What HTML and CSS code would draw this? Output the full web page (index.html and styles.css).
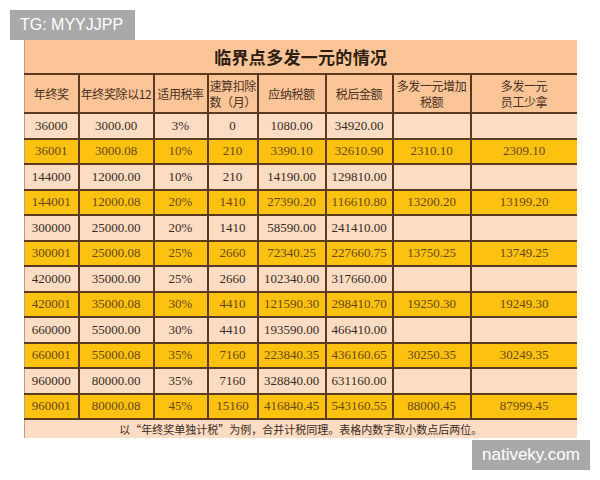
FILE: index.html
```html
<!DOCTYPE html>
<html lang="zh-CN">
<head>
<meta charset="utf-8">
<title>临界点多发一元的情况</title>
<link rel="stylesheet" href="styles.css">
</head>
<body>
<div class="page">
  <table class="tax">
    <colgroup>
      <col class="c1"><col class="c2"><col class="c3"><col class="c4">
      <col class="c5"><col class="c6"><col class="c7"><col class="c8">
    </colgroup>
    <thead>
      <tr class="title-row"><th colspan="8">临界点多发一元的情况</th></tr>
      <tr class="head-row">
        <th>年终奖</th>
        <th>年终奖除以12</th>
        <th>适用税率</th>
        <th class="left">速算扣除<br>数（月）</th>
        <th>应纳税额</th>
        <th>税后金额</th>
        <th>多发一元增加<br>税额</th>
        <th>多发一元<br>员工少拿</th>
      </tr>
    </thead>
    <tbody>
      <tr class="lt"><td>36000</td><td>3000.00</td><td>3%</td><td>0</td><td>1080.00</td><td>34920.00</td><td></td><td></td></tr>
      <tr class="yl"><td>36001</td><td>3000.08</td><td>10%</td><td>210</td><td>3390.10</td><td>32610.90</td><td>2310.10</td><td>2309.10</td></tr>
      <tr class="lt"><td>144000</td><td>12000.00</td><td>10%</td><td>210</td><td>14190.00</td><td>129810.00</td><td></td><td></td></tr>
      <tr class="yl"><td>144001</td><td>12000.08</td><td>20%</td><td>1410</td><td>27390.20</td><td>116610.80</td><td>13200.20</td><td>13199.20</td></tr>
      <tr class="lt"><td>300000</td><td>25000.00</td><td>20%</td><td>1410</td><td>58590.00</td><td>241410.00</td><td></td><td></td></tr>
      <tr class="yl"><td>300001</td><td>25000.08</td><td>25%</td><td>2660</td><td>72340.25</td><td>227660.75</td><td>13750.25</td><td>13749.25</td></tr>
      <tr class="lt"><td>420000</td><td>35000.00</td><td>25%</td><td>2660</td><td>102340.00</td><td>317660.00</td><td></td><td></td></tr>
      <tr class="yl"><td>420001</td><td>35000.08</td><td>30%</td><td>4410</td><td>121590.30</td><td>298410.70</td><td>19250.30</td><td>19249.30</td></tr>
      <tr class="lt"><td>660000</td><td>55000.00</td><td>30%</td><td>4410</td><td>193590.00</td><td>466410.00</td><td></td><td></td></tr>
      <tr class="yl"><td>660001</td><td>55000.08</td><td>35%</td><td>7160</td><td>223840.35</td><td>436160.65</td><td>30250.35</td><td>30249.35</td></tr>
      <tr class="lt"><td>960000</td><td>80000.00</td><td>35%</td><td>7160</td><td>328840.00</td><td>631160.00</td><td></td><td></td></tr>
      <tr class="yl"><td>960001</td><td>80000.08</td><td>45%</td><td>15160</td><td>416840.45</td><td>543160.55</td><td>88000.45</td><td>87999.45</td></tr>
    </tbody>
    <tfoot>
      <tr class="foot-row"><td colspan="8">以“年终奖单独计税”为例，合并计税同理。表格内数字取小数点后两位。</td></tr>
    </tfoot>
  </table>
  <div class="mark mark-tg">TG: MYYJJPP</div>
  <div class="mark mark-site">nativeky.com</div>
</div>
</body>
</html>
```
FILE: styles.css
```css
html, body {
  margin: 0;
  padding: 0;
  background: #ffffff;
}

.page {
  position: relative;
  width: 600px;
  height: 480px;
  padding: 40px 24px 0 24px;
  box-sizing: border-box;
}

.tax {
  width: 552px;
  border-collapse: collapse;
  table-layout: fixed;
  font-family: "Liberation Serif", "Noto Sans CJK SC", serif;
  font-size: 13px;
  color: #3b2a1e;
}

.c1 { width: 54px; }
.c2 { width: 75px; }
.c3 { width: 54px; }
.c4 { width: 50px; }
.c5 { width: 68px; }
.c6 { width: 67px; }
.c7 { width: 78px; }
.c8 { width: 106px; }

.tax th,
.tax td {
  padding: 0;
  text-align: center;
  vertical-align: middle;
  border: 2px solid #5c3a22;
  white-space: nowrap;
}

.tax tr > :first-child { border-left: 1px solid #c99a78; }
.tax tr > :last-child { border-right: none; }

.title-row th {
  height: 33px;
  background: #fbc598;
  border-top: none;
  font-family: "Noto Sans CJK SC", sans-serif;
  font-size: 17px;
  font-weight: 700;
  color: #2e1d12;
  letter-spacing: 0.3px;
}

.head-row th {
  height: 37px;
  background: #fbc598;
  font-family: "Noto Sans CJK SC", sans-serif;
  font-size: 12px;
  font-weight: 400;
  line-height: 16px;
  color: #4a3020;
  letter-spacing: -0.4px;
}

.head-row th.left { text-align: left; padding-left: 1px; }

.tax tbody td { height: 23.5px; line-height: 14px; }

.lt td { background: #fcddc3; color: #3a2b22; }
.yl td { background: #fcc20f; color: #6a4716; }

.foot-row td {
  height: 18px;
  background: #fcdcc3;
  border-bottom: none;
  font-family: "Noto Sans CJK SC", sans-serif;
  font-size: 11px;
  line-height: 14px;
  color: #3a2b22;
}

.mark {
  position: absolute;
  background: #a9a9a9;
  color: #ffffff;
  font-family: "Liberation Sans", Arial, sans-serif;
  line-height: 30px;
  height: 30px;
  box-sizing: border-box;
}

.mark-tg {
  left: 10px;
  top: 10px;
  width: 125px;
  padding-left: 10px;
  font-size: 16px;
}

.mark-site {
  left: 472px;
  top: 440px;
  width: 118px;
  padding-left: 10px;
  font-size: 17px;
}
```
